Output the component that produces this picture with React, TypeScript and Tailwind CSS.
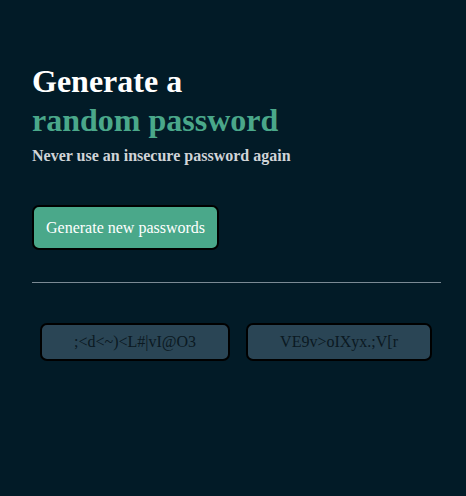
import React from "react";

export default function App() {
  const passwords = [";<d<~)<L#|vI@O3", "VE9v>oIXyx.;V[r"];
  return (
    <div
      className="min-h-[496px] w-full bg-[#021b27] pl-8 pr-[25px] pt-[62px]"
      style={{ fontFamily: '"Liberation Serif", "Times New Roman", serif' }}
    >
      <h1 className="text-[32px] font-bold leading-[39px] text-white">
        Generate a
        <br />
        <span className="text-[#4aa88a]">random password</span>
      </h1>
      <p className="mt-[7px] text-[16px] font-bold leading-[18px] text-[#d0d4d8]">
        Never use an insecure password again
      </p>
      <button className="mt-[40px] h-[45px] rounded-[7px] border-2 border-black bg-[#4aa88a] px-[12px] text-[16px] text-white">
        Generate new passwords
      </button>
      <div className="mt-[32px] h-px w-full bg-[#7b8a94]" />
      <div className="mt-[40px] flex gap-[16px] pl-2">
        {passwords.map((p) => (
          <div
            key={p}
            className="flex h-[38px] items-center rounded-[7px] border-2 border-black bg-[#2a4555] px-[32px] text-[16px] text-[#0b1922]"
          >
            {p}
          </div>
        ))}
      </div>
    </div>
  );
}
